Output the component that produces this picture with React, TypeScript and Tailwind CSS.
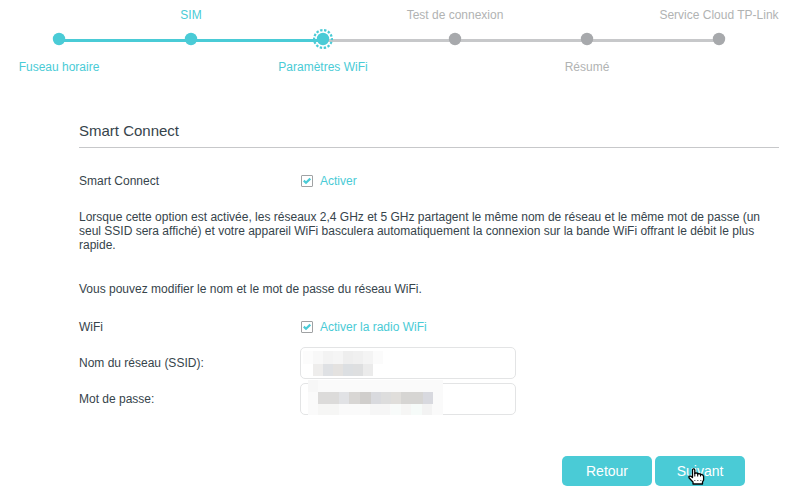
import { useState } from "react";
import type { ReactNode } from "react";

// ── Wizard steps ──────────────────────────────────────────────
type StepState = "done" | "current" | "todo";

interface Step {
    label: string;
    state: StepState;
}

const STEPS: Step[] = [
    { label: "Fuseau horaire", state: "done" },
    { label: "SIM", state: "done" },
    { label: "Paramètres WiFi", state: "current" },
    { label: "Test de connexion", state: "todo" },
    { label: "Résumé", state: "todo" },
    { label: "Service Cloud TP-Link", state: "todo" },
];

// ── Masked values: [x, y, width, height, color] ───────────────
type Cell = [number, number, number, number, string];

const SSID_MASK: Cell[] = [
    [0, 0, 10, 13, "#fcfcfc"],
    [10, 0, 10, 13, "#f8f8f8"],
    [20, 0, 10, 13, "#f3f3f3"],
    [30, 0, 10, 13, "#f5f5f5"],
    [40, 0, 10, 13, "#eeeeee"],
    [50, 0, 10, 13, "#f0f0f0"],
    [60, 0, 10, 13, "#f4f4f4"],
    [70, 0, 10, 13, "#fbfbfb"],
    [10, 13, 10, 12, "#eeedec"],
    [20, 13, 10, 12, "#dfe1e4"],
    [30, 13, 10, 12, "#e4e2e0"],
    [40, 13, 10, 12, "#dcdfe2"],
    [50, 13, 10, 12, "#dedfe0"],
    [60, 13, 10, 12, "#ebebeb"],
];

const PASSWORD_MASK: Cell[] = [
    [0, 0, 135, 35, "#fafafa"],
    [0, 0, 10, 12, "#f7f7f7"],
    [10, 12, 21, 12, "#dcdbda"],
    [31, 12, 10, 12, "#e1e2e5"],
    [41, 12, 11, 12, "#d8d6d4"],
    [52, 12, 11, 12, "#d0cecc"],
    [63, 12, 10, 12, "#d9dade"],
    [73, 12, 10, 12, "#dddddd"],
    [83, 12, 10, 12, "#e0dedb"],
    [93, 12, 22, 12, "#d6d5d3"],
    [115, 12, 10, 12, "#d8d9df"],
    [10, 24, 21, 11, "#f6f6f5"],
    [62, 24, 20, 11, "#f6f6f6"],
    [83, 24, 10, 11, "#f8fbfa"],
    [93, 24, 10, 11, "#f6f6f5"],
    [103, 24, 11, 11, "#f6fbf9"],
    [114, 24, 10, 11, "#f3f3f3"],
];

function Mask({ cells, width, height, className }: { cells: Cell[]; width: number; height: number; className: string }) {
    return (
        <svg width={width} height={height} className={className} shapeRendering="crispEdges" aria-hidden="true">
            {cells.map(([x, y, w, h, fill], i) => (
                <rect key={i} x={x} y={y} width={w} height={h} fill={fill} />
            ))}
        </svg>
    );
}

function StepLabel({ step, show }: { step: Step; show: boolean }) {
    return (
        <span className={`h-[14px] whitespace-nowrap ${step.state === "todo" ? "text-[#b1b3b3]" : "text-[#4acbd6]"}`}>
            {show ? step.label : ""}
        </span>
    );
}

function Stepper() {
    return (
        <ol className="flex pt-2 pr-[70px] pl-[59px]">
            {STEPS.map((step, i) => (
                <li key={step.label} className={`flex items-start ${i < STEPS.length - 1 ? "flex-1" : ""}`}>
                    {/* Labels alternate above and below the line */}
                    <div className="relative z-10 flex w-0 flex-col items-center">
                        <StepLabel step={step} show={i % 2 === 1} />
                        <svg viewBox="0 0 20 20" className="mt-[7px] mb-[11px] h-5 w-5 shrink-0" aria-hidden="true">
                            {step.state === "current" && (
                                <circle cx="10" cy="10" r="8.9" fill="none" stroke="#4acbd6" strokeWidth="2.2" strokeDasharray="2.4 1.594" strokeDashoffset="1.2" />
                            )}
                            <circle cx="10" cy="10" r="6.2" fill={step.state === "todo" ? "#a7a9ac" : "#4acbd6"} />
                        </svg>
                        <StepLabel step={step} show={i % 2 === 0} />
                    </div>
                    {i < STEPS.length - 1 && (
                        <div className={`mt-[31px] h-[3px] flex-1 ${step.state === "done" ? "bg-[#4acbd6]" : "bg-[#c7c8ca]"}`} />
                    )}
                </li>
            ))}
        </ol>
    );
}

function Checkbox({ id, label }: { id: string; label: string }) {
    const [checked, setChecked] = useState(true);

    return (
        <label htmlFor={id} className="flex items-center gap-[7px] pl-px text-[#4acbd6]">
            <span className="relative h-3 w-3">
                <input
                    id={id}
                    type="checkbox"
                    checked={checked}
                    onChange={(e) => setChecked(e.target.checked)}
                    className="block h-3 w-3 appearance-none rounded-[1px] border border-[#a0a2a4] bg-white"
                />
                {checked && (
                    <svg viewBox="0 0 12 12" className="pointer-events-none absolute inset-0 h-3 w-3" aria-hidden="true">
                        <path d="M2.8 5.6L5 7.7 9.3 3.6" fill="none" stroke="#4acbd6" strokeWidth="2.2" />
                    </svg>
                )}
            </span>
            {label}
        </label>
    );
}

function Row({ label, htmlFor, children }: { label: string; htmlFor: string; children: ReactNode }) {
    return (
        <div className="flex items-center">
            <label htmlFor={htmlFor} className="w-[221px] shrink-0">{label}</label>
            {children}
        </div>
    );
}

const INPUT = "block h-8 w-[216px] rounded-[5px] border border-[#e3e4e5] bg-white px-2 outline-none";
const BUTTON = "relative h-[30px] w-[90px] rounded-[5px] bg-[#4acbd6] text-sm text-white";

// ── Page ──────────────────────────────────────────────────────
export default function App() {
    return (
        <div className="overflow-x-hidden bg-white pb-3 font-['Liberation_Sans',Arial,sans-serif] text-[12px] leading-[14px] text-[#36444b]">
            <Stepper />

            <main className="pt-[47px] pr-[10px] pl-[79px]">
                <h1 className="border-b border-[#c7c8ca] pb-[6px] text-[15px] leading-5">Smart Connect</h1>

                <div className="mt-[26px]">
                    <Row label="Smart Connect" htmlFor="smart-connect">
                        <Checkbox id="smart-connect" label="Activer" />
                    </Row>
                </div>

                <p className="mt-[22px]">
                    Lorsque cette option est activée, les réseaux 2,4 GHz et 5 GHz partagent le même nom de réseau et le
                    même mot de passe (un seul SSID sera affiché) et votre appareil WiFi basculera automatiquement la
                    connexion sur la bande WiFi offrant le débit le plus rapide.
                </p>
                <p className="mt-[30px] mb-6">Vous pouvez modifier le nom et le mot de passe du réseau WiFi.</p>

                <Row label="WiFi" htmlFor="wifi-radio">
                    <Checkbox id="wifi-radio" label="Activer la radio WiFi" />
                </Row>

                <div className="mt-[13px] flex flex-col gap-1">
                    <Row label="Nom du réseau (SSID):" htmlFor="ssid">
                        <div className="relative">
                            <input id="ssid" type="text" className={INPUT} />
                            <Mask cells={SSID_MASK} width={80} height={25} className="pointer-events-none absolute top-1 left-[3px]" />
                        </div>
                    </Row>
                    <Row label="Mot de passe:" htmlFor="password">
                        <div className="relative">
                            <input id="password" type="password" className={INPUT} />
                            <Mask cells={PASSWORD_MASK} width={135} height={35} className="pointer-events-none absolute -top-[3px] left-2" />
                        </div>
                    </Row>
                </div>
            </main>

            <div className="mt-[41px] flex justify-end gap-[3px] pr-11">
                <button type="button" className={BUTTON}>Retour</button>
                <button type="button" className={BUTTON}>
                    Suivant
                    {/* Hand pointer */}
                    <svg viewBox="0 0 17 17" className="pointer-events-none absolute top-[12px] left-[33px] h-[17px] w-[17px]" aria-hidden="true">
                        <path
                            d="M4.5 9.5V2Q4.5.8 5.6.8T6.8 2V5.5L7.6 4.8 9.6 5.2V6L10.4 5.6 12.4 6V6.8L13.2 6.4 15 7.2 15.6 8.5V12L14.5 14V16H5V14L3.5 12.5 1 9.8V8.2H2.8Z"
                            fill="#fff"
                            stroke="#000"
                            strokeWidth="1.3"
                            strokeLinejoin="round"
                        />
                        <path d="M6.8 5V8.5M9.7 6V8.5M12.5 7V8.5" stroke="#000" />
                        <path d="M6 12.5h1.5M9 12.5h1.5M12 12.5h1.5" stroke="#777" />
                    </svg>
                </button>
            </div>
        </div>
    );
}
